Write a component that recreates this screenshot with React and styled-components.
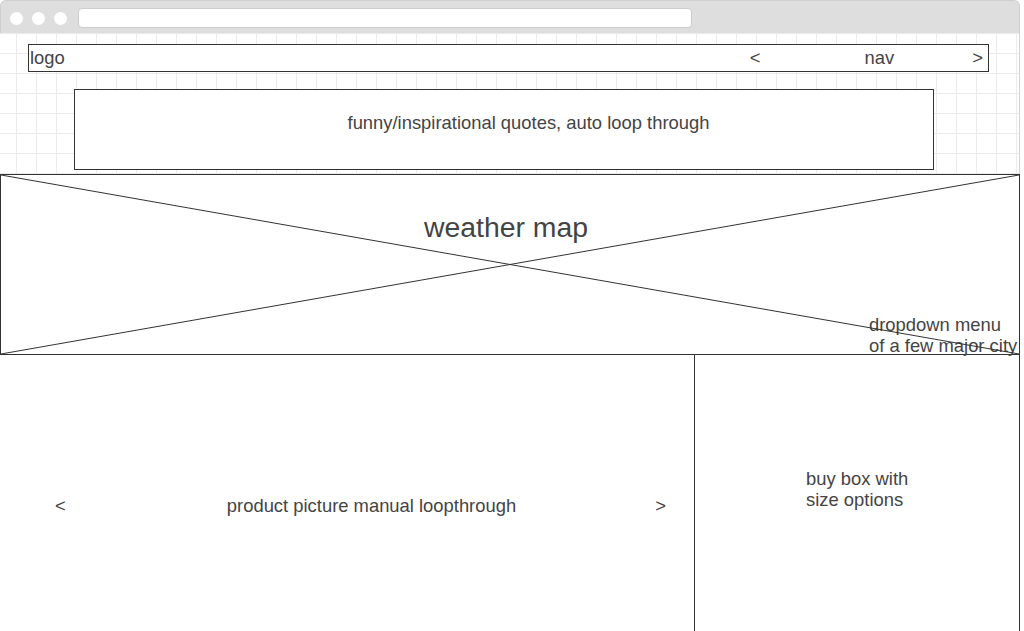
import React from "react";
import styled, { createGlobalStyle } from "styled-components";

const GlobalStyle = createGlobalStyle`
  html, body { margin: 0; padding: 0; background: #ffffff; }
  body { font-family: "Liberation Sans", Arial, sans-serif; color: #444444; overflow: hidden; }
  * { box-sizing: border-box; }
`;

const Window = styled.div`
  width: 1020px;
  display: flex;
  flex-direction: column;
`;

const Chrome = styled.div`
  height: 33px;
  background: #dedede;
  border: 1px solid #cfcfcf;
  border-bottom: none;
  border-radius: 6px 6px 0 0;
  display: flex;
  align-items: flex-start;
  padding-left: 9px;
`;

const Dot = styled.span`
  width: 13px;
  height: 13px;
  border-radius: 50%;
  background: #ffffff;
  margin-top: 11px;
  margin-right: 9px;
  flex: none;
`;

const AddressBar = styled.div`
  width: 614px;
  height: 20px;
  margin-top: 7px;
  margin-left: 2px;
  background: #ffffff;
  border: 1px solid #cccccc;
  border-radius: 4px;
`;

const GridArea = styled.div`
  border-right: 1px solid #d2d2d2;
  padding: 11px 0 4px;
  display: flex;
  flex-direction: column;
  background-color: #ffffff;
  background-image:
    linear-gradient(to right, #ebebeb 1px, transparent 1px),
    linear-gradient(to bottom, #ebebeb 1px, transparent 1px);
  background-size: 20px 20px;
  background-position: 16px 0;
`;

const Box = styled.div`
  background: #ffffff;
  border: 1px solid #333333;
`;

const Header = styled(Box)`
  margin-left: 28px;
  width: 961px;
  height: 28px;
  display: flex;
  align-items: center;
  padding-left: 1px;
  font-size: 18.4px;
`;

const Logo = styled.span`
  flex: 1;
`;

const NavText = styled.span`
  margin-right: ${(p) => p.$gap}px;
`;

const Quotes = styled(Box)`
  margin-left: 74px;
  margin-top: 17px;
  width: 860px;
  height: 81px;
  padding: 22px 0 0 49px;
  text-align: center;
  font-size: 18.4px;
  line-height: 22px;
`;

const Weather = styled.div`
  position: relative;
  width: 1020px;
  height: 181px;
  border: 1px solid #333333;
  background: #ffffff;
  display: flex;
  flex-direction: column;
`;

const Cross = styled.svg`
  position: absolute;
  inset: 0;
  width: 100%;
  height: 100%;
  pointer-events: none;
`;

const WeatherTitle = styled.div`
  padding-top: 36px;
  padding-right: 8px;
  text-align: center;
  font-size: 28.4px;
  line-height: 32px;
`;

const Dropdown = styled.div`
  margin-top: auto;
  margin-bottom: -2px;
  padding-left: 868px;
  font-size: 18.4px;
  line-height: 21px;
  white-space: nowrap;
`;

const BottomRow = styled.div`
  display: flex;
  height: 300px;
`;

const Product = styled.div`
  width: 694px;
  display: flex;
  align-items: flex-start;
  padding: 140px 0 0 55px;
  font-size: 18.4px;
  line-height: 22px;
`;

const Arrow = styled.span`
  flex: none;
`;

const ProductLabel = styled.span`
  flex: 1;
  text-align: center;
  padding-left: 22px;
`;

const ProductEnd = styled.span`
  flex: none;
  margin-right: 28px;
`;

const BuyBox = styled.div`
  width: 326px;
  border-left: 1px solid #333333;
  border-right: 1px solid #333333;
  padding: 113px 0 0 111px;
  font-size: 18.4px;
  line-height: 21px;
`;

export default function App() {
  return (
    <>
      <GlobalStyle />
      <Window>
        <Chrome>
          <Dot />
          <Dot />
          <Dot />
          <AddressBar />
        </Chrome>
        <GridArea>
          <Header>
            <Logo>logo</Logo>
            <NavText $gap={104}>&lt;</NavText>
            <NavText $gap={78}>nav</NavText>
            <NavText $gap={5}>&gt;</NavText>
          </Header>
          <Quotes>funny/inspirational quotes, auto loop through</Quotes>
        </GridArea>
        <Weather>
          <Cross viewBox="0 0 100 100" preserveAspectRatio="none">
            <line x1="0" y1="0" x2="100" y2="100" stroke="#333333" strokeWidth="1" vectorEffect="non-scaling-stroke" />
            <line x1="0" y1="100" x2="100" y2="0" stroke="#333333" strokeWidth="1" vectorEffect="non-scaling-stroke" />
          </Cross>
          <WeatherTitle>weather map</WeatherTitle>
          <Dropdown>
            dropdown menu
            <br />
            of a few major city
          </Dropdown>
        </Weather>
        <BottomRow>
          <Product>
            <Arrow>&lt;</Arrow>
            <ProductLabel>product picture manual loopthrough</ProductLabel>
            <ProductEnd>&gt;</ProductEnd>
          </Product>
          <BuyBox>
            buy box with
            <br />
            size options
          </BuyBox>
        </BottomRow>
      </Window>
    </>
  );
}
